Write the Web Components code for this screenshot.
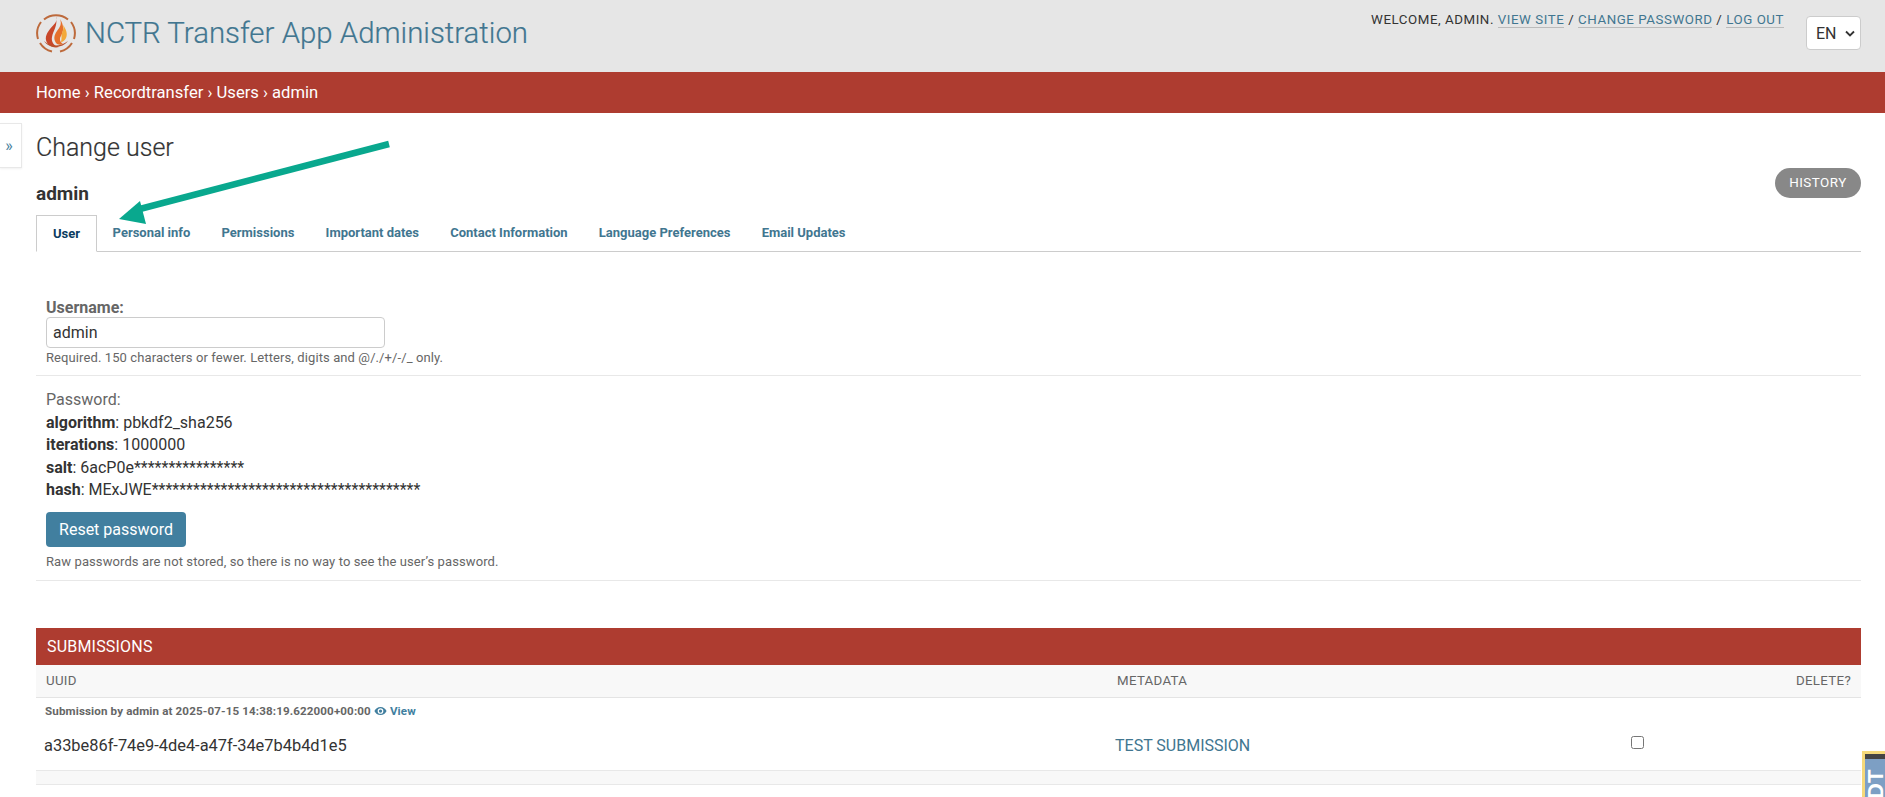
<!DOCTYPE html>
<html lang="en"><head><meta charset="utf-8"><title>Change user</title>
<style>
html,body{margin:0;padding:0;background:#fff;height:797px;overflow:hidden}
body{font-family:Roboto,"Liberation Sans",sans-serif;color:#333;font-size:16px;position:relative}
</style></head><body>
<nctr-header></nctr-header>
<nctr-crumbs>Home › Recordtransfer › Users › admin</nctr-crumbs>
<nav-toggle></nav-toggle>
<page-arrow></page-arrow>
<admin-main>
  <change-head title-text="Change user" object-text="admin"></change-head>
  <tab-bar></tab-bar>
  <user-form></user-form>
  <submission-table></submission-table>
</admin-main>
<debug-handle></debug-handle>
<script>
function def(name, html){
  customElements.define(name, class extends HTMLElement{
    constructor(){super();const r=this.attachShadow({mode:'open'});
      r.innerHTML=typeof html==='function'?html(this):html;}
  });
}
def('nctr-header',`<style>
:host{display:flex;justify-content:space-between;height:72px;background:#e6e6e6;padding:0 24px 0 36px;box-sizing:border-box}
.brand{display:flex;align-items:flex-start;padding-top:13px;gap:9px}
svg{width:40px;height:40px;flex:none}
h1{margin:0;font:300 29.4px/40px Roboto,sans-serif;color:#417690;white-space:nowrap;-webkit-text-stroke:.2px #417690}
.right{display:flex;gap:22px;align-items:flex-start}
.tools{font:400 13.3px/16px Roboto,sans-serif;letter-spacing:.55px;color:#333;padding-top:12px;text-transform:uppercase;white-space:nowrap}
a{color:#417690;text-decoration:none;border-bottom:1px solid #bbb}
.lang{margin-top:16px;width:55px;height:34px;box-sizing:border-box;background:#fff;border:1px solid #ccc;border-radius:4px;display:flex;align-items:center;gap:8px;padding-left:9px;font:400 16px Roboto,sans-serif;color:#333}
.lang svg{width:10px;height:7px}
</style>
<div class="brand">
<svg viewBox="0 0 40 40"><g fill="none" stroke="#bd6a3c" stroke-width="2">
<path d="M8 6.5A19 19 0 0 1 32 6.5"/><path d="M35 9A19 19 0 0 1 38 26"/><path d="M36 30A19 19 0 0 1 24 38.5"/><path d="M16 38.5A19 19 0 0 1 4 30"/><path d="M2 26A19 19 0 0 1 5 9"/></g>
<path d="M20 3c2 6-2 8-6 13-4 5-6 10-2 15 3 3 7 4 11 3-5-1-8-5-7-10 1-6 6-11 4-21z" fill="#c8472a"/>
<path d="M24 6c2 5 0 8-3 12-3 4-4 9 0 13 2 1 4 1 6 0-3-2-4-5-2-8 3-5 3-11-1-17z" fill="#e5702c"/>
<path d="M27 12c3 4 5 9 3 13-1 2-3 4-5 4 1-4 0-6 1-9 1-3 2-5 1-8z" fill="#f3a93a"/>
<path d="M8 28c5 5 15 7 24 0-5 7-18 9-24 0z" fill="#b8502a"/></svg>
<h1>NCTR Transfer App Administration</h1></div>
<div class="right"><div class="tools">Welcome, <span>admin</span>. <a>View site</a> / <a>Change password</a> / <a>Log out</a></div>
<div class="lang">EN<svg viewBox="0 0 10 7"><path d="M1 1.5l4 4 4-4" fill="none" stroke="#333" stroke-width="1.8"/></svg></div></div>`);
def('nctr-crumbs',`<style>:host{display:flex;align-items:center;height:41px;background:#ae3c30;color:#fff;padding-left:36px;font:400 16.6px Roboto,sans-serif}</style><slot></slot>`);
def('nav-toggle',`<style>:host{position:absolute;left:0;top:123px;width:22px;height:45px;box-sizing:border-box;background:#fff;border:1px solid #e8e8e8;border-left:0;box-shadow:0 1px 2px rgba(0,0,0,.06);color:#447e9b;font:400 16px/43px Roboto,sans-serif;text-align:center;padding-right:3px}</style>»`);
def('page-arrow',`<style>:host{position:absolute;left:0;top:0;width:420px;height:240px;pointer-events:none;z-index:3}svg{display:block}</style>
<svg width="420" height="240" viewBox="0 0 420 240"><path d="M389 144L136 210" stroke="#09a88e" stroke-width="6.5" fill="none"/><path d="M119 219L140 201L146 224Z" fill="#09a88e"/></svg>`);
def('admin-main',`<style>:host{display:block;padding:0 24px 0 36px}</style><slot></slot>`);
def('change-head',el=>`<style>
:host{display:block;padding-top:20px}
h1{margin:0;font:300 25px/30px Roboto,sans-serif;color:#333;height:30px;-webkit-text-stroke:.2px #333}
.row{display:flex;justify-content:space-between;align-items:flex-start;height:38px;margin-top:5px}
h2{margin:14px 0 0;font:700 19px/24px Roboto,sans-serif;color:#333}
.pill{height:30px;width:86px;box-sizing:border-box;border-radius:15px;background:#888;color:#fff;font:400 13.4px/30px Roboto,sans-serif;letter-spacing:.5px;text-align:center}
</style><h1>${el.getAttribute('title-text')||'Change user'}</h1><div class="row"><h2>${el.getAttribute('object-text')||'admin'}</h2><div class="pill">HISTORY</div></div>`);
def('tab-bar',`<style>
:host{display:flex;margin-top:9px;height:37px;box-sizing:border-box;border-bottom:1px solid #ccc;font:700 13px/36px Roboto,sans-serif;color:#417690}
span{padding:0 15.6px;white-space:nowrap}
.on{box-sizing:border-box;height:37px;width:61px;padding:0;text-align:center;background:#fff;border:1px solid #ccc;border-bottom:1px solid #fff;color:#0c3c61}
</style><span class="on">User</span><span>Personal info</span><span>Permissions</span><span>Important dates</span><span>Contact Information</span><span>Language Preferences</span><span>Email Updates</span>`);
def('user-form',`<style>
:host{display:block;color:#333;font-family:Roboto,sans-serif}
.row{border-bottom:1px solid #e8e8e8;padding-left:10px}
.r1{padding-top:46px;padding-bottom:9px}
label{display:block;font:700 16px/20px Roboto,sans-serif;color:#666;height:19px}
input{display:block;box-sizing:border-box;width:339px;height:31px;border:1px solid #ccc;border-radius:4px;padding:0 6px;font:400 16px Roboto,sans-serif;color:#333;background:#fff;margin:0}
.help{font:400 13px/16px Roboto,sans-serif;color:#666;margin-top:2px;letter-spacing:.1px}
.r2{padding-top:13px;padding-bottom:10px;font:400 16px/22.6px Roboto,sans-serif}
.pw{color:#666}
b{font-weight:700}
.btn{display:block;box-sizing:border-box;width:140px;height:35px;margin-top:10px;background:#417f9f;color:#fff;border-radius:4px;font:400 16px/35px Roboto,sans-serif;text-align:center}
.r2 .help{margin-top:7px}
</style>
<div class="row r1"><label>Username:</label><input value="admin"><div class="help">Required. 150 characters or fewer. Letters, digits and @/./+/-/_ only.</div></div>
<div class="row r2"><div class="pw">Password:</div>
<div><b>algorithm</b>: pbkdf2_sha256</div><div><b>iterations</b>: 1000000</div><div><b>salt</b>: 6acP0e****************</div><div><b>hash</b>: MExJWE***************************************</div>
<div class="btn">Reset password</div><div class="help">Raw passwords are not stored, so there is no way to see the user’s password.</div></div>`);
def('submission-table',`<style>
:host{display:block;margin-top:47px;font-family:Roboto,sans-serif}
.title{height:37px;background:#ae3c30;color:#fff;font:400 16px/37px Roboto,sans-serif;padding-left:11px;letter-spacing:.2px}
.grid{display:grid;grid-template-columns:1071px 514px 1fr}
.head{height:33px;box-sizing:border-box;background:#f8f8f8;border-bottom:1px solid #e4e4e4;font:400 13.3px/32px Roboto,sans-serif;color:#666;letter-spacing:.3px}
.head div{padding-left:10px}
.head div:last-child{text-align:right;padding:0 10px 0 0}
.sub{padding:6px 0 0 9px;font:700 11.6px/14px Roboto,sans-serif;color:#666;display:flex;align-items:center;gap:3px;letter-spacing:.13px}
.sub a{color:#417f9f;display:flex;align-items:center;gap:3px}
.sub svg{width:13px;height:10px}
.main{padding:16px 0 12px;border-bottom:1px solid #e8e8e8;font:400 16.4px/24px Roboto,sans-serif;color:#333;align-items:center}
.main div:first-child{padding-left:8px}
.main a{color:#417690;display:block;padding-left:8px;font-size:16px}
input{margin:0 0 6px 10px;display:block;width:13px;height:13px}
.gap{height:13px;background:#f8f8f8;border-bottom:1px solid #e8e8e8}
</style>
<div class="title">SUBMISSIONS</div>
<div class="grid head"><div>UUID</div><div>METADATA</div><div>DELETE?</div></div>
<div class="sub"><span>Submission by admin at 2025-07-15 14:38:19.622000+00:00</span><a><svg viewBox="0 0 16 12"><path d="M8 1C4.5 1 1.7 3.2.5 6c1.2 2.8 4 5 7.5 5s6.3-2.2 7.5-5C14.300 3.200 11.500 1 8 1zm0 8.500A3.500 3.500 0 1 1 8 2.500a3.500 3.500 0 0 1 0 7zM8 4a2 2 0 1 0 0 4 2 2 0 0 0 0-4z" fill="#417f9f" fill-rule="evenodd"/></svg>View</a></div>
<div class="grid main"><div>a33be86f-74e9-4de4-a47f-34e7b4b4d1e5</div><div><a>TEST SUBMISSION</a></div><div><input type="checkbox"></div></div>
<div class="gap"></div>`);
def('debug-handle',`<style>
:host{position:absolute;left:1862px;top:751px;width:23px;height:46px;box-sizing:border-box;border:3px solid #f5d97a;border-right:0;border-bottom:0;background:#7d9fc4;overflow:hidden}
.top{height:5px;background:#444}
.t{position:absolute;left:1px;top:7px;writing-mode:vertical-rl;transform:rotate(180deg);font:700 22px/20px "Liberation Sans",sans-serif;color:#fff;height:60px;text-align:left}
i{font-style:normal}
</style><div class="top"></div><div class="t">DjDT</div>`);
</script>
</body></html>
